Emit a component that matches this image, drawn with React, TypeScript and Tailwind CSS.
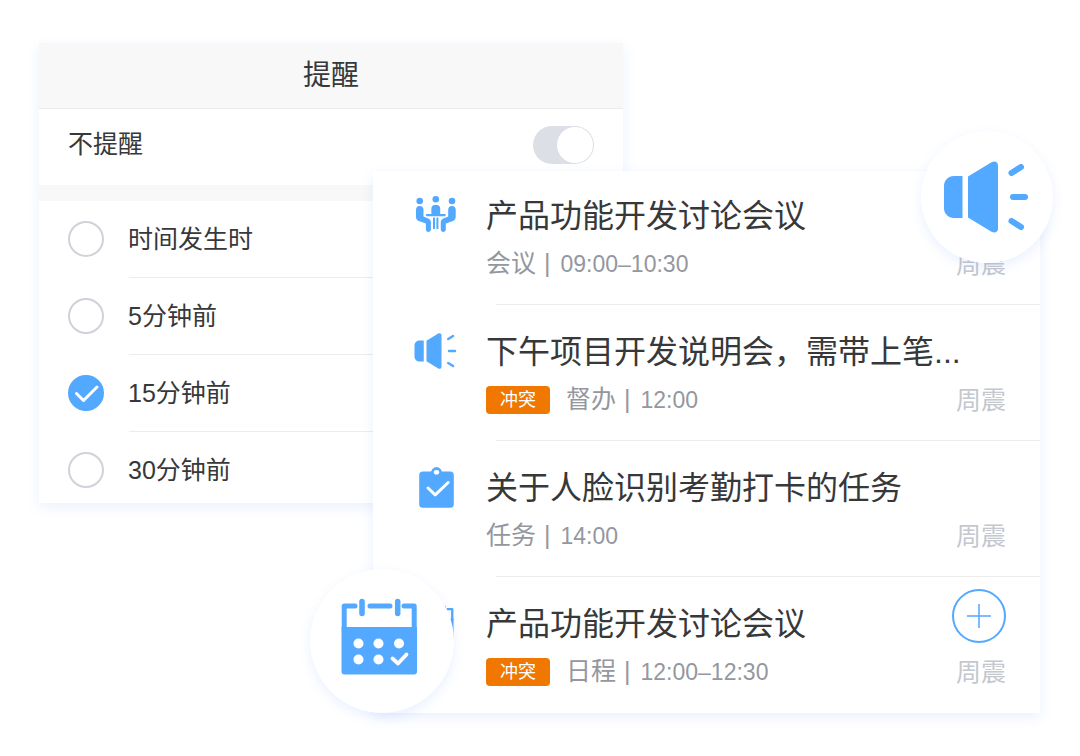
import { useState } from 'react'
import type { ReactNode } from 'react'

type AgendaItem = {
  title: string
  kind: string
  time: string
  owner: string
  conflict?: boolean
  canAdd?: boolean
  icon: ReactNode
}

function MeetingIcon() {
  return (
    <svg className="size-11" viewBox="0 0 44 44" fill="currentColor" aria-hidden>
      <circle cx="5.7" cy="8" r="3.3" />
      <circle cx="21.8" cy="6.2" r="3.3" />
      <circle cx="38" cy="8" r="3.3" />
      <path d="M5.7 13c2.4 0 3.800 1.600 3.800 3.800v6.600l4.800 2.200c1.700.8 2.600 1.900 2.600 3.600v7.400c0 3.300-5 3.300-5 0v-6L4.800 28.100C2.700 27.200 2 25.900 2 23.800v-7C2 14.600 3.400 13 5.700 13z" />
      <path d="M38 13c-2.400 0-3.800 1.600-3.800 3.800v6.600l-4.800 2.200c-1.700.8-2.600 1.900-2.600 3.600v7.400c0 3.300 5 3.300 5 0v-6l7.100-2.500c2.100-.9 2.800-2.200 2.800-4.300v-7C41.700 14.600 40.300 13 38 13z" />
      <path d="M17.400 21.500v-6.200c0-2 1.400-3.400 3.300-3.400h2.200c1.900 0 3.300 1.400 3.300 3.400v6.200z" />
      <rect x="11.800" y="21" width="20" height="2.200" rx="1.100" />
      <rect x="19" y="24.400" width="2" height="11.600" rx="0.500" />
      <rect x="22.400" y="24.400" width="2" height="11.600" rx="0.500" />
    </svg>
  )
}

function SpeakerIcon({ className, ray }: { className: string; ray: number }) {
  return (
    <svg className={className} viewBox="0 0 88 72" fill="currentColor" aria-hidden>
      <path d="M19.5 15H11C5 15 1 19.5 1 25v22c0 5.500 4 10 10 10h8.500z" />
      <path d="M25 15.500 48.500 1.200c3-1.800 6.500-.6 6.500 3.300v63c0 3.900-3.500 5.100-6.500 3.300L25 56.500z" />
      <path
        d="M68.500 12l9.500-6M70 36h12M68.500 60l9.500 6"
        fill="none"
        stroke="currentColor"
        strokeWidth={ray}
        strokeLinecap="round"
      />
    </svg>
  )
}

function ClipboardIcon() {
  return (
    <svg className="size-11" viewBox="0 0 44 44" aria-hidden>
      <rect x="5.2" y="6.500" width="34.600" height="36.300" rx="3.600" fill="currentColor" />
      <circle cx="22.500" cy="7.500" r="5.400" fill="currentColor" />
      <ellipse cx="22.500" cy="7.300" rx="2.700" ry="2.300" fill="white" />
      <path d="M14 23l7.200 6.800L34.200 17.500" fill="none" stroke="white" strokeWidth="3" strokeLinecap="round" strokeLinejoin="round" />
    </svg>
  )
}

function CalendarIcon({ className }: { className: string }) {
  return (
    <svg className={className} viewBox="0 0 78 78" fill="none" aria-hidden>
      <path d="M1.500 30h75.500v44.500a3 3 0 0 1-3 3h-69.500a3 3 0 0 1-3-3z" fill="currentColor" />
      <path d="M4.200 32V9H15M30 9h20M64 9h10.200v23" stroke="currentColor" strokeWidth="5" strokeLinecap="round" strokeLinejoin="round" />
      <path d="M22 4.500v12M57.700 4.500v12" stroke="currentColor" strokeWidth="5.500" strokeLinecap="round" />
      <g fill="white">
        <circle cx="18.500" cy="46.500" r="5" />
        <circle cx="38.500" cy="46.500" r="5" />
        <circle cx="59" cy="46.500" r="5" />
        <circle cx="18.500" cy="62.500" r="5" />
        <circle cx="38.500" cy="62.500" r="5" />
      </g>
      <path d="M52.500 61.500l5.500 5L66.500 57.500" stroke="white" strokeWidth="3.800" strokeLinecap="round" strokeLinejoin="round" />
    </svg>
  )
}

const reminders = ['时间发生时', '5分钟前', '15分钟前', '30分钟前']

const agenda: AgendaItem[] = [
  {
    title: '产品功能开发讨论会议',
    kind: '会议',
    time: '09:00–10:30',
    owner: '周震',
    icon: <MeetingIcon />,
  },
  {
    title: '下午项目开发说明会，需带上笔...',
    kind: '督办',
    time: '12:00',
    owner: '周震',
    conflict: true,
    icon: <SpeakerIcon className="h-9 w-11" ray={5} />,
  },
  {
    title: '关于人脸识别考勤打卡的任务',
    kind: '任务',
    time: '14:00',
    owner: '周震',
    icon: <ClipboardIcon />,
  },
  {
    title: '产品功能开发讨论会议',
    kind: '日程',
    time: '12:00–12:30',
    owner: '周震',
    conflict: true,
    canAdd: true,
    icon: <CalendarIcon className="size-9" />,
  },
]

function ReminderCard() {
  const [selected, setSelected] = useState('15分钟前')

  return (
    <section className="col-start-1 col-end-3 row-start-1 self-start bg-white pb-px shadow-[0_4px_12px_rgba(70,130,255,0.12)]">
      <h2 className="border-b border-[#ececec] bg-[#f8f8f8] py-3 pt-[13px] text-center text-[28px] leading-10">
        提醒
      </h2>
      <div className="flex h-19 items-center justify-between pr-[29px] pb-1 pl-[29px] text-[25px]">
        <label htmlFor="mute">不提醒</label>
        <input
          id="mute"
          type="checkbox"
          role="switch"
          defaultChecked
          className="flex h-[38px] w-[61px] appearance-none items-center rounded-full bg-[#dcdfe6] px-px before:size-9 before:rounded-full before:bg-white checked:justify-end"
        />
      </div>
      <div className="h-4 bg-[#f8f8f8]" />
      <div role="radiogroup" aria-label="提醒">
        {reminders.map((name, i) => (
          <div key={name} className="group">
            <label className="flex h-19 items-center gap-6 pl-[29px] text-[25px] group-last:h-[70px] group-last:pt-1.5">
              <span className="grid size-9 shrink-0 place-items-center">
                <input
                  type="radio"
                  name="reminder"
                  value={name}
                  checked={selected === name}
                  onChange={() => setSelected(name)}
                  className="peer col-start-1 row-start-1 size-9 appearance-none rounded-full border-2 border-[#cfd2d9] checked:border-[#53a8ff] checked:bg-[#53a8ff]"
                />
                <svg
                  className="pointer-events-none invisible col-start-1 row-start-1 size-9 peer-checked:visible"
                  viewBox="0 0 36 36"
                  fill="none"
                  stroke="white"
                  strokeWidth="3"
                  strokeLinecap="round"
                  strokeLinejoin="round"
                  aria-hidden
                >
                  <path d="M8.500 18.500l7 7L29 12" />
                </svg>
              </span>
              <span className="pt-0.5">{name}</span>
            </label>
            {i < reminders.length - 1 && <hr className="ml-[90px] border-[#ececec]" />}
          </div>
        ))}
      </div>
    </section>
  )
}

function AgendaRow({ item }: { item: AgendaItem }) {
  return (
    <div className="flex min-h-[135px] items-end pr-[34px] pb-7 pl-[41px] group-first:min-h-[133px]">
      <div className="mr-7 mb-[39px] flex size-11 shrink-0 items-center justify-center text-[#53a8ff]">
        {item.icon}
      </div>
      <div className="min-w-0 flex-1">
        <h3 className="text-[32px] leading-10 whitespace-nowrap">{item.title}</h3>
        <p className="mt-4 flex h-6 items-center text-[25px] text-[#94979e]">
          {item.conflict && (
            <span className="mr-4 flex h-7 w-16 items-center justify-center rounded-sm bg-[#f07800] text-lg text-white">
              冲突
            </span>
          )}
          {item.kind}
          <span className="mr-2.5 ml-2">|</span>
          <time className="text-[23px]">{item.time}</time>
        </p>
      </div>
      <div className="flex shrink-0 flex-col items-end">
        {item.canAdd && (
          <button
            type="button"
            aria-label="添加"
            className="mb-[17px] flex size-[54px] items-center justify-center rounded-full border-2 border-[#53a8ff] text-[#53a8ff]"
          >
            <svg className="size-6" viewBox="0 0 24 24" stroke="currentColor" strokeWidth="1.500" aria-hidden>
              <path d="M12 0v24M0 12h24" />
            </svg>
          </button>
        )}
        <span className="text-[25px] leading-6 text-[#c4c7ce]">{item.owner}</span>
      </div>
    </div>
  )
}

function AgendaCard() {
  return (
    <section className="relative col-start-2 col-end-4 row-start-1 mt-32 self-start bg-white pb-px shadow-[0_4px_12px_rgba(70,130,255,0.12)]">
      <ul>
        {agenda.map((item, i) => (
          <li key={i} className="group">
            <AgendaRow item={item} />
            {i < agenda.length - 1 && <hr className="ml-[123px] border-[#ececec]" />}
          </li>
        ))}
      </ul>

      <div className="absolute -top-10 -right-[13px] flex size-33 items-center justify-center rounded-full bg-white text-[#53a8ff] shadow-[0_4px_12px_rgba(70,130,255,0.12)]">
        <SpeakerIcon className="h-18 w-22" ray={6} />
      </div>
      <div className="absolute bottom-0 -left-[63px] flex size-36 items-center justify-center rounded-full bg-white pr-1.5 pb-2.5 text-[#53a8ff] shadow-[0_4px_12px_rgba(70,130,255,0.12)]">
        <CalendarIcon className="size-[78px]" />
      </div>
    </section>
  )
}

export default function App() {
  return (
    <main className="grid grid-cols-[334fr_250fr_417fr] bg-white pt-[43px] pr-10 pb-10 pl-[39px] font-['Liberation_Sans','Noto_Sans_CJK_SC',sans-serif] text-[#36383a]">
      <ReminderCard />
      <AgendaCard />
    </main>
  )
}
